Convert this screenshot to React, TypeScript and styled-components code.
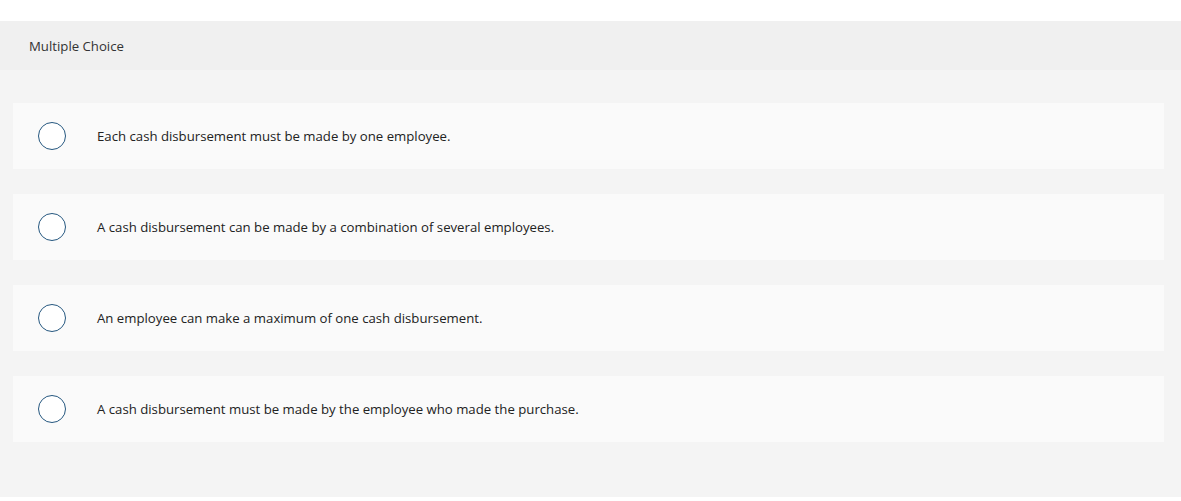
import * as React from 'react';
import styled, { createGlobalStyle } from 'styled-components';

const GlobalStyle = createGlobalStyle`
  html, body {
    margin: 0;
    padding: 0;
    background: #ffffff;
  }
  body {
    font-family: 'Open Sans', Arial, sans-serif;
    color: #222;
  }
`;

const Page = styled.div`
  padding-top: 21px;
`;

const Header = styled.div`
  background: #f0f0f0;
  height: 49px;
  display: flex;
  align-items: center;
  padding: 1px 0 0 29px;
  box-sizing: border-box;
  font-size: 13.2px;
  color: #333;
`;

const Body = styled.div`
  background: #f4f4f4;
  padding: 33px 17px 55px 13px;
  display: flex;
  flex-direction: column;
  gap: 25px;
`;

const Choice = styled.label`
  display: flex;
  align-items: center;
  height: 66px;
  background: #fafafa;
  padding-left: 25px;
  cursor: pointer;
`;

const Radio = styled.span`
  width: 26px;
  height: 26px;
  border: 1px solid #25577f;
  border-radius: 50%;
  background: #fff;
  flex-shrink: 0;
  margin-right: 31px;
`;

const ChoiceText = styled.span`
  font-size: 13.2px;
  color: #222;
`;

const choices = [
  'Each cash disbursement must be made by one employee.',
  'A cash disbursement can be made by a combination of several employees.',
  'An employee can make a maximum of one cash disbursement.',
  'A cash disbursement must be made by the employee who made the purchase.',
];

export default function App() {
  return (
    <Page>
      <GlobalStyle />
      <Header>Multiple Choice</Header>
      <Body>
        {choices.map((c) => (
          <Choice key={c}>
            <Radio />
            <ChoiceText>{c}</ChoiceText>
          </Choice>
        ))}
      </Body>
    </Page>
  );
}
